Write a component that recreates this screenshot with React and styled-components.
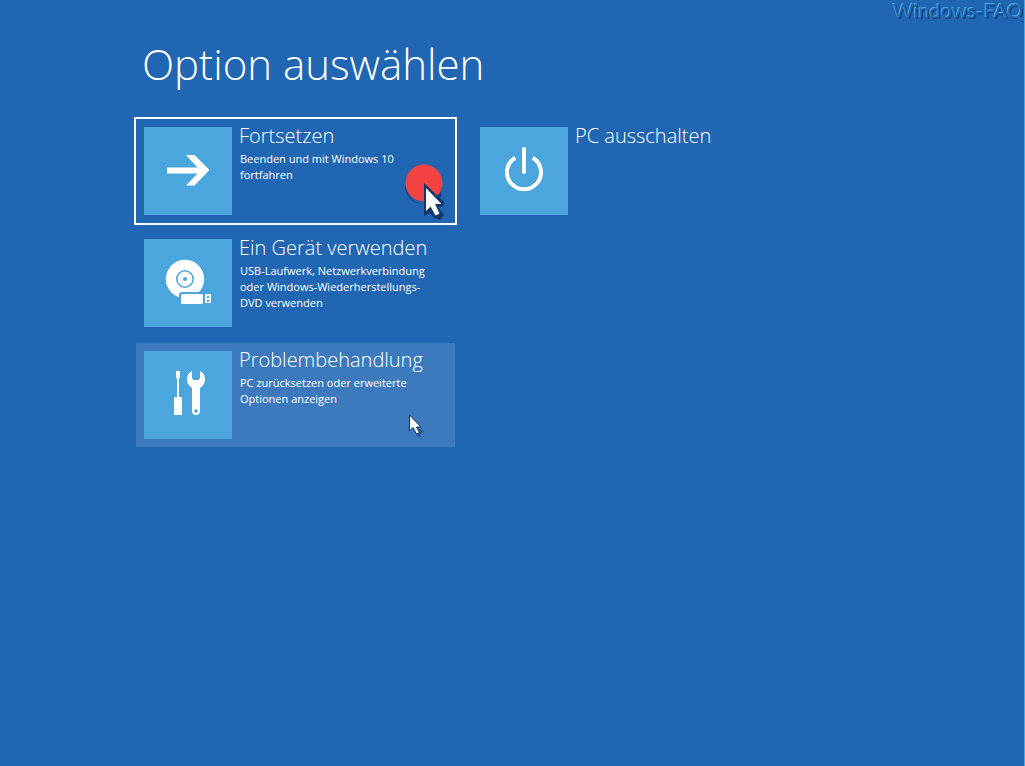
import React from "react";
import styled, { createGlobalStyle } from "styled-components";

const GlobalStyle = createGlobalStyle`
  * { box-sizing: border-box; }
  body {
    margin: 0;
    background: #2166b3;
    color: #fff;
    font-family: "Open Sans", "Noto Sans", sans-serif;
  }
`;

const Screen = styled.div`
  position: relative;
  min-height: 100vh;
  overflow: hidden;
  border-right: 1px solid #4ba6dd;
`;

const Watermark = styled.div`
  position: absolute;
  top: 0;
  right: 1px;
  font: 400 20px/20px Lato, sans-serif;
  color: #2166b3;
  white-space: nowrap;
  text-shadow: -1px -1px 0 #4ba6dd, 1px 1px 0 #143c74;
`;

const Main = styled.main`
  padding: 32px 16px 32px 136px;
`;

const Heading = styled.h1`
  margin: 0 0 23px 6px;
  font-size: 42px;
  line-height: 64px;
  font-weight: 300;
`;

const Options = styled.div`
  display: flex;
  flex-wrap: wrap;
  align-items: flex-start;
  gap: 8px 17px;
`;

const Column = styled.div`
  display: flex;
  flex-direction: column;
  gap: 8px;
  width: 319px;
`;

const Tile = styled.button`
  position: relative;
  display: flex;
  align-items: flex-start;
  gap: 7px;
  width: 100%;
  padding: 8px;
  border: 0;
  background: ${(p) => (p.$hovered ? "#3d7abd" : "transparent")};
  outline: ${(p) => (p.$focused ? "2px solid #fff" : "none")};
  color: inherit;
  font-family: inherit;
  text-align: left;
`;

const IconBox = styled.span`
  flex: none;
  width: 88px;
  height: 88px;
  background: #4ba6dd;

  svg { display: block; }
`;

const Label = styled.span`
  display: flex;
  flex-direction: column;
  gap: 6px;
  width: 192px;
`;

const Title = styled.span`
  font-size: 20px;
  line-height: 18px;
  font-weight: 300;
  white-space: nowrap;
`;

const Description = styled.span`
  padding-left: 1px;
  font-size: 11px;
  line-height: 16px;
  font-weight: 400;
`;

const Pointer = styled.svg`
  position: absolute;
  right: ${(p) => p.$right}px;
  bottom: ${(p) => p.$bottom}px;
  overflow: visible;
`;

const ArrowIcon = () => (
  <svg width="88" height="88" viewBox="0 0 88 88" fill="#fff" aria-hidden="true">
    <path d="M23 40.500H53.500L42 28H50.500L65.500 43L50.500 58.500H42L53.500 46.500H23Z" />
  </svg>
);

const DeviceIcon = () => (
  <svg width="88" height="88" viewBox="0 0 88 88" aria-hidden="true">
    <circle cx="41" cy="40" r="19.200" fill="#fff" />
    <circle cx="41" cy="40" r="8.200" fill="none" stroke="#4ba6dd" strokeWidth="1.500" />
    <circle cx="41" cy="40" r="2" fill="#4ba6dd" />
    <path d="M35 60V56Q35 53 38 53H62V67H35Z" fill="#4ba6dd" />
    <rect x="37" y="55" width="22" height="10" rx="1.500" fill="#fff" />
    <path d="M61 55H67V64H61Z" fill="#fff" />
    <path d="M63 57H65V59H63ZM63 61H65V63H63Z" fill="#4ba6dd" />
  </svg>
);

const ToolsIcon = () => (
  <svg width="88" height="88" viewBox="0 0 88 88" fill="#fff" aria-hidden="true">
    <path d="M32 20H36V26L35 28V46H37Q38 46 38 47V64H30V47Q30 46 31 46H33V28L32 26Z" />
    <path d="M48 20Q43 22.500 43 28Q43 34 48 37V60Q48 64 52 64Q56 64 56 60V37Q61 34 61 28Q61 22.500 56 20V27L54.500 29H49.500L48 27Z" />
    <circle cx="52" cy="60" r="1.800" fill="#4ba6dd" />
  </svg>
);

const PowerIcon = () => (
  <svg width="88" height="88" viewBox="0 0 88 88" fill="none" stroke="#fff" strokeWidth="4" aria-hidden="true">
    <path d="M44 22V45" strokeLinecap="round" />
    <path d="M35.200 30.700A17 17 0 1 0 52.800 30.700" />
  </svg>
);

const ClickPointer = () => (
  <Pointer $right={7} $bottom={4} width="44" height="56" viewBox="0 0 44 56" aria-hidden="true">
    <path d="M1 21A18 18 0 0 0 25 40L36 26L38 32L32 41H20Q5 40 1 21Z" fill="#17407f" />
    <circle cx="20" cy="20" r="18.500" fill="#f34242" />
    <path d="M20 20L41 40L38 44H34L40 52L36 57L30 55L26 50L20 53Z" fill="#12356b" />
    <path d="M22 25V48L26.500 43.500L31.500 52.500L35.500 50.500L31 41H37.500Z" fill="#fff" />
  </Pointer>
);

const HoverPointer = () => (
  <Pointer $right={32} $bottom={12} width="14" height="20" viewBox="0 0 14 20" aria-hidden="true">
    <path d="M5 14L13 14L15 17L11 19L12 22L8 21Z" fill="#25599b" />
    <path d="M0.500 0V16L4 12.500L7.500 19L10.500 17.500L7.500 12H12Z" fill="#fff" stroke="#12356b" />
  </Pointer>
);

function OptionTile({ icon, title, description, focused, hovered, children }) {
  return (
    <Tile type="button" $focused={focused} $hovered={hovered}>
      <IconBox>{icon}</IconBox>
      <Label>
        <Title>{title}</Title>
        {description && <Description>{description}</Description>}
      </Label>
      {children}
    </Tile>
  );
}

export default function App() {
  return (
    <Screen>
      <GlobalStyle />
      <Main>
        <Heading>Option auswählen</Heading>
        <Options>
          <Column>
            <OptionTile
              focused
              icon={<ArrowIcon />}
              title="Fortsetzen"
              description="Beenden und mit Windows 10 fortfahren"
            >
              <ClickPointer />
            </OptionTile>
            <OptionTile
              icon={<DeviceIcon />}
              title="Ein Gerät verwenden"
              description="USB-Laufwerk, Netzwerkverbindung oder Windows-Wiederherstellungs-DVD verwenden"
            />
            <OptionTile
              hovered
              icon={<ToolsIcon />}
              title="Problembehandlung"
              description="PC zurücksetzen oder erweiterte Optionen anzeigen"
            >
              <HoverPointer />
            </OptionTile>
          </Column>
          <Column>
            <OptionTile icon={<PowerIcon />} title="PC ausschalten" />
          </Column>
        </Options>
      </Main>
      <Watermark>Windows-FAQ</Watermark>
    </Screen>
  );
}
